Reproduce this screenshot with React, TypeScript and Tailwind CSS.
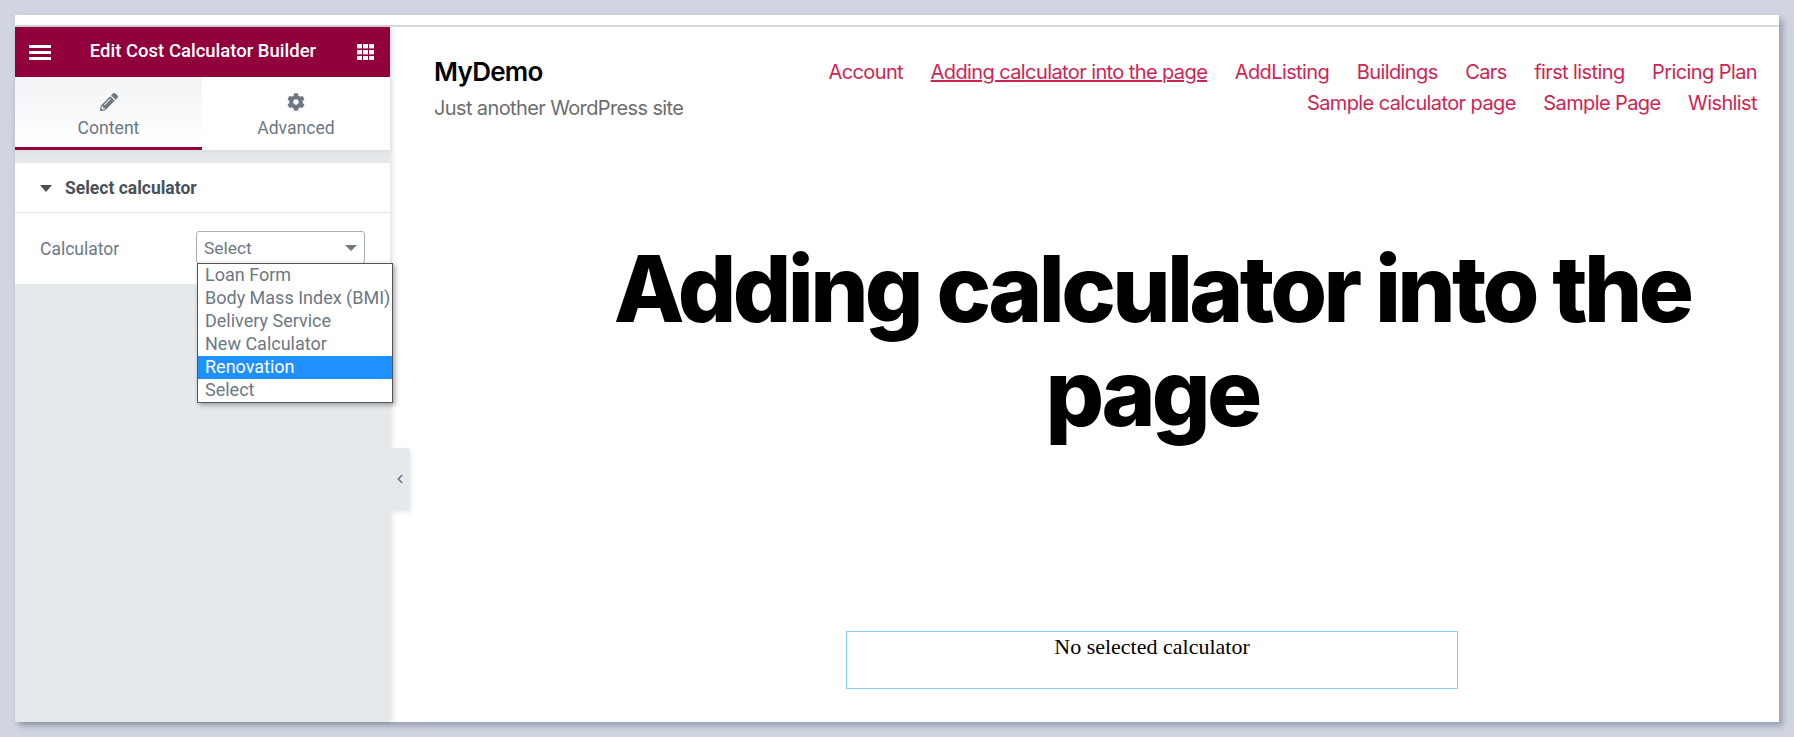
import React from "react";
import { ChevronLeft } from "lucide-react";

const navRow1 = ["Account", "Adding calculator into the page", "AddListing", "Buildings", "Cars", "first listing", "Pricing Plan"];
const navRow2 = ["Sample calculator page", "Sample Page", "Wishlist"];
const options = ["Loan Form", "Body Mass Index (BMI)", "Delivery Service", "New Calculator", "Renovation", "Select"];

function NavRow({ items }: { items: string[] }) {
  return (
    <div className="flex justify-end gap-[27.5px] h-[31.5px] items-center">
      {items.map((t) => (
        <a key={t} className={"text-[20px] tracking-[-0.6px] text-[#cd2653] whitespace-nowrap " + (t.startsWith("Adding") ? "underline" : "")}>
          {t}
        </a>
      ))}
    </div>
  );
}

export default function App() {
  return (
    <div className="w-[1794px] h-[737px] bg-[#d0d5e1] p-[15px] overflow-hidden" style={{ fontFamily: "Inter, sans-serif" }}>
      <div className="w-[1764px] h-[707px] bg-white flex flex-col shadow-[4px_4px_6px_rgba(100,110,130,0.5)]">
        <div className="h-[12px] shrink-0 border-b-2 border-[#d5d8dc]" />
        <div className="flex flex-1 min-h-0">
          <aside className="relative w-[375px] shrink-0 bg-[#e6e9ec] shadow-[2px_0_5px_rgba(0,0,0,0.12)]" style={{ fontFamily: "Roboto, sans-serif" }}>
            <div className="h-[50px] bg-[#92003b] flex items-center justify-between pl-[14px] pr-[16px] text-white">
              <svg width="22" height="15" viewBox="0 0 22 15" fill="#fff">
                <rect y="0" width="22" height="3" rx="0.5" />
                <rect y="6" width="22" height="3" rx="0.5" />
                <rect y="12" width="22" height="3" rx="0.5" />
              </svg>
              <span className="text-[18.5px] font-medium -translate-x-[1px]">Edit Cost Calculator Builder</span>
              <svg width="17" height="16" viewBox="0 0 17 16" fill="#fff">
                {[0, 6, 12].map((y) =>
                  [0, 6, 12].map((x) => <rect key={x + "-" + y} x={x} y={y} width="5" height="4.4" />)
                )}
              </svg>
            </div>
            <div className="flex h-[73px] bg-white shadow-[0_2px_6px_rgba(0,0,0,0.06)]">
              <div className="w-[187px] flex flex-col items-center pt-[16px] border-b-[3px] border-[#92003b] bg-gradient-to-b from-[#f1f3f5] to-white">
                <svg width="18" height="18" viewBox="0 0 512 512" fill="#6d7882">
                  <path d="M497.9 142.1l-46.1 46.1c-4.700 4.700-12.300 4.700-17 0l-111-111c-4.700-4.700-4.700-12.300 0-17l46.100-46.100c18.700-18.700 49.100-18.700 67.900 0l60.100 60.100c18.800 18.700 18.800 49.100 0 67.900zM284.200 99.800L21.600 362.400.4 483.900c-2.900 16.400 11.400 30.600 27.800 27.800l121.500-21.300 262.600-262.600c4.700-4.700 4.700-12.300 0-17l-111-111c-4.800-4.700-12.400-4.700-17.100 0zM124.100 339.900c-5.500-5.500-5.500-14.300 0-19.800l154-154c5.500-5.500 14.300-5.500 19.800 0s5.500 14.300 0 19.800l-154 154c-5.500 5.500-14.300 5.500-19.800 0zM88 424h48v36.300l-64.500 11.300-31.100-31.100L51.700 376H88v48z" />
                </svg>
                <span className="text-[17.6px] text-[#6d7882] mt-[7px] leading-[20px]">Content</span>
              </div>
              <div className="flex-1 flex flex-col items-center pt-[16px]">
                <svg width="18" height="18" viewBox="0 0 512 512" fill="#6d7882">
                  <path d="M487.400 315.700l-42.600-24.600c4.300-23.200 4.300-47 0-70.200l42.600-24.600c4.900-2.800 7.100-8.600 5.500-14-11.100-35.600-30-67.800-54.700-94.600-3.800-4.100-10-5.100-14.800-2.300L380.800 110c-17.900-15.400-38.500-27.300-60.800-35.100V25.800c0-5.600-3.900-10.500-9.400-11.700-36.700-8.200-74.300-7.800-109.200 0-5.500 1.200-9.400 6.100-9.400 11.700V75c-22.200 7.900-42.800 19.800-60.800 35.100L88.700 85.500c-4.900-2.800-11-1.900-14.800 2.300-24.700 26.700-43.600 58.900-54.700 94.600-1.700 5.400.6 11.200 5.500 14L67.300 221c-4.300 23.200-4.300 47 0 70.200l-42.600 24.600c-4.900 2.800-7.100 8.600-5.500 14 11.100 35.600 30 67.800 54.700 94.600 3.800 4.100 10 5.100 14.800 2.300l42.600-24.600c17.900 15.400 38.500 27.300 60.800 35.100v49.200c0 5.600 3.900 10.500 9.400 11.700 36.700 8.200 74.300 7.800 109.200 0 5.500-1.200 9.400-6.100 9.400-11.700v-49.200c22.200-7.900 42.800-19.800 60.800-35.100l42.600 24.600c4.900 2.800 11 1.900 14.800-2.300 24.700-26.700 43.600-58.900 54.700-94.600 1.500-5.500-.7-11.300-5.600-14.100zM256 336c-44.100 0-80-35.900-80-80s35.900-80 80-80 80 35.900 80 80-35.900 80-80 80z" />
                </svg>
                <span className="text-[17.6px] text-[#6d7882] mt-[7px] leading-[20px]">Advanced</span>
              </div>
            </div>
            <div className="mt-[13px] bg-white">
              <div className="h-[50px] flex items-center pl-[25px] border-b border-[#e6e9ec] pt-[1px]">
                <svg width="12" height="7" viewBox="0 0 12 7" fill="#495157"><path d="M0 0h12L6 7z" /></svg>
                <span className="ml-[13px] text-[17.5px] font-bold text-[#495157]">Select calculator</span>
              </div>
              <div className="h-[71px] flex pl-[25px] pt-[18px]">
                <span className="text-[17.5px] text-[#6d7882] w-[156px] h-[33px] flex items-center pt-[3px]">Calculator</span>
                <div className="w-[169px] h-[33px] border border-[#a4afb7] rounded-[3px] flex items-center justify-between pl-[7px] pr-[7px] pt-[1px] text-[17.4px] text-[#6d7882]">
                  <span>Select</span>
                  <svg width="12" height="6" viewBox="0 0 12 6" fill="#6d7882"><path d="M0 0h12L6 6z" /></svg>
                </div>
              </div>
            </div>
            <div className="absolute left-[182px] top-[236px] w-[196px] border border-[#555] bg-white shadow-[2px_2px_5px_rgba(0,0,0,0.35)] z-10">
              {options.map((o) => (
                <div key={o} className={"h-[23px] pl-[7px] text-[18px] leading-[22px] whitespace-nowrap overflow-hidden " + (o === "Renovation" ? "bg-[#1e90ff] text-white" : "text-[#6d7882]")}>
                  {o}
                </div>
              ))}
            </div>
            <div className="absolute left-[375px] top-[421px] w-[19px] h-[62px] bg-[#e6e9ec] flex items-center justify-center shadow-[2px_2px_4px_rgba(0,0,0,0.1)] z-10">
              <ChevronLeft size={14} color="#6d7882" strokeWidth={3} />
            </div>
          </aside>
          <main className="flex-1 min-w-0 flex flex-col">
            <header className="flex justify-between pl-[44px] pr-[22px] pt-[29px] h-[110px]">
              <div className="pt-[1px]">
                <div className="text-[26px] font-semibold tracking-[-0.72px] text-black leading-[29px]">MyDemo</div>
                <div className="text-[20px] tracking-[-0.62px] text-[#6d6d6d] mt-[9px] leading-[26px]">Just another WordPress site</div>
              </div>
              <nav className="flex flex-col">
                <NavRow items={navRow1} />
                <NavRow items={navRow2} />
              </nav>
            </header>
            <div className="pl-[135px] flex flex-col items-center">
              <h1 className="mt-[100px] w-[1200px] text-center text-[92px] font-extrabold leading-[104px] tracking-[-3.7px] text-black">
                Adding calculator into the page
              </h1>
              <div className="mt-[186px] w-[612px] h-[58px] border border-[#7fd3f0] text-center text-[22px] leading-[30px] text-black" style={{ fontFamily: "'Liberation Serif', serif" }}>
                No selected calculator
              </div>
            </div>
          </main>
        </div>
      </div>
    </div>
  );
}
